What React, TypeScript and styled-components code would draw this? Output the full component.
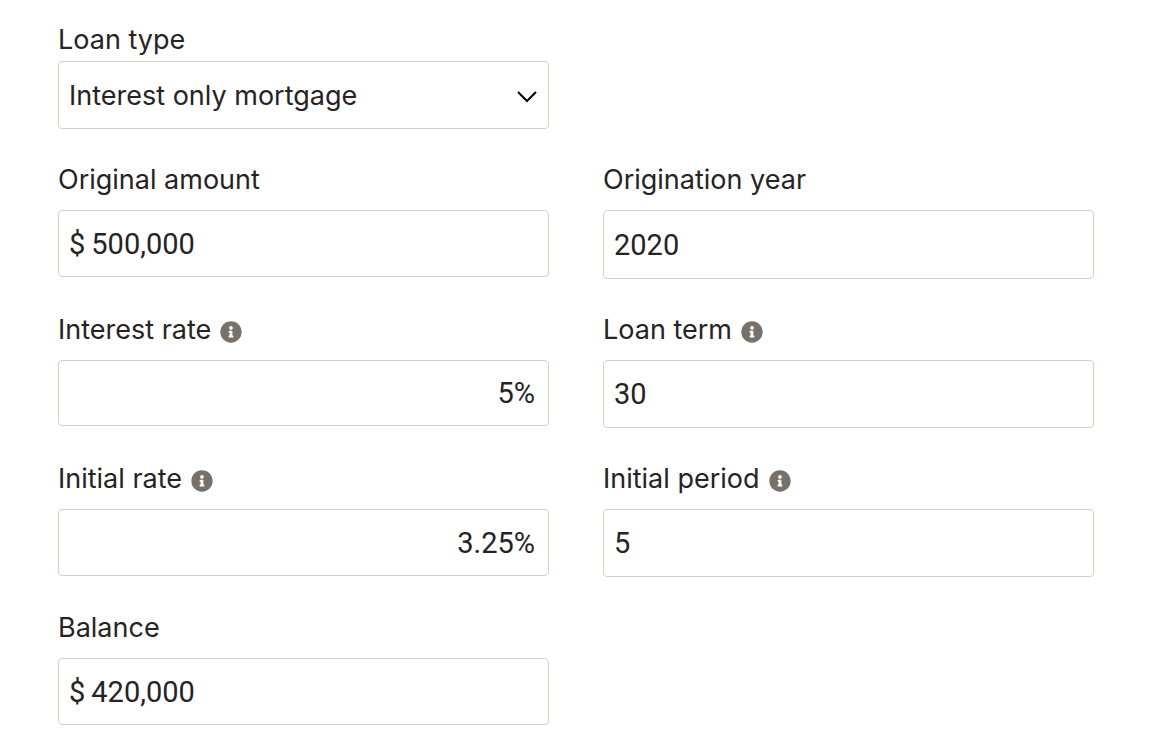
import React from "react";
import styled, { createGlobalStyle } from "styled-components";

const GlobalStyle = createGlobalStyle`
  *, *::before, *::after { box-sizing: border-box; }
  body {
    margin: 0;
    background: #fff;
    color: #272324;
    font-family: Inter, "Liberation Sans", sans-serif;
    font-size: 27px;
  }
`;

const Form = styled.form`
  display: grid;
  grid-template-columns: repeat(2, minmax(0, 1fr));
  column-gap: 54px;
  row-gap: 30px;
  align-items: start;
  padding: 19px 58px 29px;
`;

const Field = styled.div<{ $alone?: boolean; $tight?: boolean }>`
  display: flex;
  flex-direction: column;
  gap: ${(p) => (p.$tight ? 0 : 9)}px;
  grid-column: ${(p) => (p.$alone ? "1 / -1" : "auto")};
  width: ${(p) => (p.$alone ? "calc(50% - 27px)" : "auto")};
`;

const LabelRow = styled.div`
  display: flex;
  align-items: center;
  gap: 9px;
  line-height: 42px;
`;

const Label = styled.label`
  white-space: nowrap;
`;

const InfoButton = styled.button`
  display: flex;
  margin: 4px 0 0;
  padding: 0;
  border: 0;
  background: none;
  color: #78716a;
  cursor: pointer;
`;

const Box = styled.div<{ $height: number }>`
  display: grid;
  grid-template-columns: auto minmax(0, 1fr);
  align-items: center;
  height: ${(p) => p.$height}px;
  border: 1px solid #d6cfc5;
  border-radius: 4px;
  background: #fff;
  font-family: Roboto, "Liberation Sans", sans-serif;
  font-size: 29px;

  &:focus-within { border-color: #78716a; }
`;

const Prefix = styled.span`
  padding-left: 10px;
`;

const Input = styled.input<{ $align?: "left" | "right"; $prefixed?: boolean }>`
  grid-column: ${(p) => (p.$prefixed ? "2" : "1 / -1")};
  width: 100%;
  height: 100%;
  padding: 0 13px 0 ${(p) => (p.$prefixed ? 6 : 10)}px;
  border: 0;
  outline: 0;
  background: transparent;
  color: inherit;
  font: inherit;
  text-align: ${(p) => p.$align ?? "left"};
`;

const SelectBox = styled(Box)`
  font-family: Inter, "Liberation Sans", sans-serif;
  font-size: 27px;
`;

const Select = styled.select`
  grid-area: 1 / 1 / 2 / 3;
  width: 100%;
  height: 100%;
  padding: 0 44px 0 10px;
  border: 0;
  outline: 0;
  appearance: none;
  background: transparent;
  color: inherit;
  font: inherit;
`;

const Chevron = styled.svg`
  grid-area: 1 / 2 / 2 / 3;
  justify-self: end;
  margin: 4px 11px 0 0;
  pointer-events: none;
`;

function InfoIcon() {
  return (
    <svg width="22" height="22" viewBox="0 0 512 512" aria-hidden="true">
      <path
        fill="currentColor"
        d="M256 8C119 8 8 119 8 256s111 248 248 248 248-111 248-248S393 8 256 8zm0 110c23 0 42 19 42 42s-19 42-42 42-42-19-42-42 19-42 42-42zm56 254c0 7-5 12-12 12h-88c-7 0-12-5-12-12v-24c0-7 5-12 12-12h12v-64h-12c-7 0-12-5-12-12v-24c0-7 5-12 12-12h64c7 0 12 5 12 12v100h12c7 0 12 5 12 12v24z"
      />
    </svg>
  );
}

type TextFieldProps = {
  id: string;
  label: string;
  value: string;
  height: number;
  prefix?: string;
  align?: "left" | "right";
  info?: boolean;
};

function TextField({ id, label, value, height, prefix, align, info }: TextFieldProps) {
  return (
    <Field>
      <LabelRow>
        <Label htmlFor={id}>{label}</Label>
        {info && (
          <InfoButton type="button" aria-label={`About ${label.toLowerCase()}`}>
            <InfoIcon />
          </InfoButton>
        )}
      </LabelRow>
      <Box $height={height}>
        {prefix && <Prefix>{prefix}</Prefix>}
        <Input id={id} type="text" defaultValue={value} $align={align} $prefixed={!!prefix} />
      </Box>
    </Field>
  );
}

export default function App() {
  return (
    <>
      <GlobalStyle />
      <Form>
        <Field $alone $tight>
          <LabelRow>
            <Label htmlFor="loan-type">Loan type</Label>
          </LabelRow>
          <SelectBox $height={68}>
            <Select id="loan-type" defaultValue="interest-only">
              <option value="interest-only">Interest only mortgage</option>
            </Select>
            <Chevron width="20" height="12" viewBox="0 0 20 12" aria-hidden="true">
              <path d="M1 1l9 9 9-9" fill="none" stroke="#000" strokeWidth="2" />
            </Chevron>
          </SelectBox>
        </Field>
        <TextField id="original-amount" label="Original amount" value="500,000" prefix="$" height={67} />
        <TextField id="origination-year" label="Origination year" value="2020" height={69} />
        <TextField id="interest-rate" label="Interest rate" value="5%" align="right" height={66} info />
        <TextField id="loan-term" label="Loan term" value="30" height={68} info />
        <TextField id="initial-rate" label="Initial rate" value="3.25%" align="right" height={67} info />
        <TextField id="initial-period" label="Initial period" value="5" height={68} info />
        <TextField id="balance" label="Balance" value="420,000" prefix="$" height={67} />
      </Form>
    </>
  );
}
